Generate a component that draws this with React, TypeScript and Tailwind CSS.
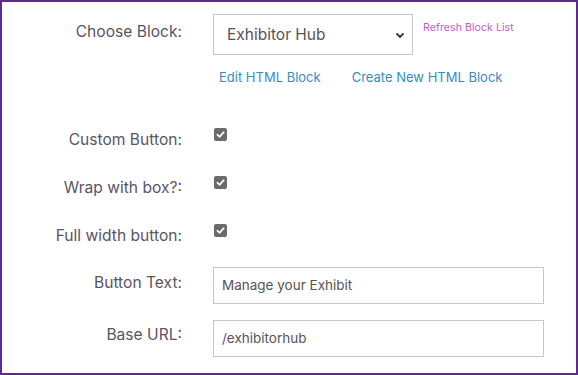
import React from "react";

function Check() {
  return (
    <div className="w-[13px] h-[13px] rounded-[2px] bg-[#6b6b6b] flex items-center justify-center">
      <svg width="9" height="9" viewBox="0 0 10 10">
        <path d="M1.5 5.2 L4 7.6 L8.6 2.4" stroke="white" strokeWidth="1.8" fill="none" strokeLinecap="round" strokeLinejoin="round" />
      </svg>
    </div>
  );
}

function Label({ children, pt }: { children: React.ReactNode; pt: string }) {
  return (
    <div className={`w-[180px] shrink-0 text-right text-[15.6px] leading-[20px] text-[#5b5562] ${pt}`}>{children}</div>
  );
}

export default function App() {
  return (
    <div
      className="w-[578px] h-[375px] border-2 border-[#5d2a8e] bg-white pt-[12px]"
      style={{ fontFamily: "Inter, 'Noto Sans', sans-serif" }}
    >
      <div className="flex items-start">
        <Label pt="pt-[8px]">Choose Block:</Label>
        <div className="ml-[31px] w-[200px] h-[41px] border border-[#c8c8c8] flex items-center justify-between pl-[13px] pr-[6px] text-[15.5px] text-[#555555]">
          <span>Exhibitor Hub</span>
          <svg width="12" height="12" viewBox="0 0 12 12">
            <path d="M2.5 4.5 L6 8 L9.5 4.5" stroke="#333" strokeWidth="1.8" fill="none" />
          </svg>
        </div>
        <div className="ml-[10px] pt-[6px] text-[10.7px] leading-[16px] text-[#c45ec4]">Refresh Block List</div>
      </div>
      <div className="flex mt-[13px] pl-[217px] text-[13px] leading-[18px] text-[#3a8cbe]">
        <span>Edit HTML Block</span>
        <span className="ml-[31px]">Create New HTML Block</span>
      </div>
      <div className="flex items-start mt-[42px] h-[22px]">
        <Label pt="pt-[2px]">Custom Button:</Label>
        <div className="ml-[32px]"><Check /></div>
      </div>
      <div className="flex items-start mt-[26px] h-[22px]">
        <Label pt="pt-[2px]">Wrap with box?:</Label>
        <div className="ml-[32px]"><Check /></div>
      </div>
      <div className="flex items-start mt-[26px] h-[22px]">
        <Label pt="pt-[2px]">Full width button:</Label>
        <div className="ml-[32px]"><Check /></div>
      </div>
      <div className="flex items-start mt-[21px]">
        <Label pt="pt-[6px]">Button Text:</Label>
        <div className="ml-[31px] w-[331px] h-[37px] border border-[#c8c8c8] flex items-center pl-[8px] text-[13.5px] text-[#555555]">
          Manage your Exhibit
        </div>
      </div>
      <div className="flex items-start mt-[16px]">
        <Label pt="pt-[5px]">Base URL:</Label>
        <div className="ml-[31px] w-[331px] h-[37px] border border-[#c8c8c8] flex items-center pl-[8px] text-[13.5px] text-[#555555]">
          /exhibitorhub
        </div>
      </div>
    </div>
  );
}
